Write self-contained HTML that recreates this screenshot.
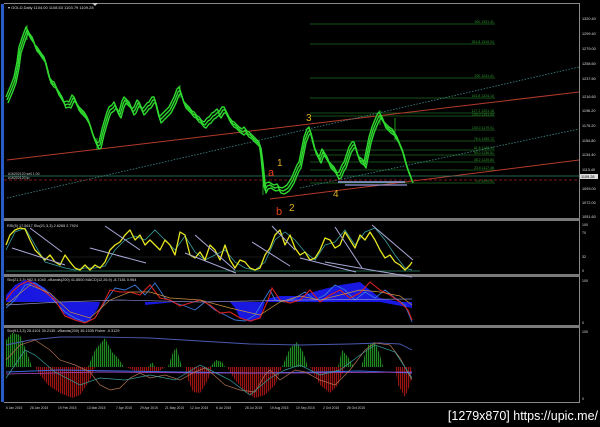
<!DOCTYPE html>
<html><head><meta charset="utf-8"><style>
html,body{margin:0;padding:0;background:#000;width:600px;height:427px;overflow:hidden}
svg{display:block}
text{font-family:"Liberation Sans",sans-serif}
</style></head><body>
<svg width="600" height="427" viewBox="0 0 600 427" xmlns="http://www.w3.org/2000/svg">
<defs>
<pattern id="gs" width="2" height="4" patternUnits="userSpaceOnUse"><rect width="1.2" height="4" fill="#1f8a1f"/></pattern>
<pattern id="rs" width="2" height="4" patternUnits="userSpaceOnUse"><rect width="1.2" height="4" fill="#9a1414"/></pattern>
</defs>
<rect width="600" height="427" fill="#000"/>
<rect x="1" y="4" width="3" height="398" fill="#2a5cc8"/>
<g fill="none" stroke="#8a8a8a" stroke-width="1">
<line x1="4" y1="3.5" x2="580" y2="3.5"/>
<line x1="579.5" y1="3" x2="579.5" y2="402"/>
<line x1="4" y1="402.5" x2="580" y2="402.5"/>
</g>
<rect x="4" y="218" width="576" height="3" fill="#7a7a7a"/>
<rect x="4" y="274" width="576" height="3" fill="#7a7a7a"/>
<rect x="4" y="325" width="576" height="3" fill="#7a7a7a"/>
<polygon points="92,3 98,3 95,6" fill="#ccc"/>

<text x="8" y="9" font-size="4" fill="#ddd">▾ GOLD,Daily  1104.00 1108.53 1103.79 1109.28</text>
<text x="8" y="175" font-size="3.5" fill="#ccc">#16202120 sell 1.00</text>
<text x="8" y="179" font-size="3.5" fill="#ccc">#16202120 tp</text>

<g stroke="#1f6a1f" stroke-width="0.8">
<line x1="310" y1="24" x2="495" y2="24"/>
<line x1="310" y1="44" x2="495" y2="44"/>
<line x1="310" y1="78" x2="495" y2="78"/>
<line x1="310" y1="98" x2="495" y2="98"/>
<line x1="310" y1="113" x2="495" y2="113"/>
<line x1="310" y1="116" x2="495" y2="116"/>
<line x1="310" y1="130" x2="495" y2="130"/>
<line x1="310" y1="141" x2="495" y2="141"/>
<line x1="310" y1="150" x2="495" y2="150"/>
<line x1="310" y1="155" x2="495" y2="155"/>
<line x1="310" y1="162" x2="495" y2="162"/>
<line x1="310" y1="170" x2="495" y2="170"/>
<line x1="310" y1="183" x2="495" y2="183"/>
</g>
<g font-size="3.5" fill="#2f9a2f" text-anchor="end">
<text x="494" y="23">300 1331.41</text><text x="494" y="43">261.8 1319.24</text>
<text x="494" y="77">200 1241.41</text><text x="494" y="97">161.8 1224.14</text>
<text x="494" y="112">127.2 1201.16</text><text x="494" y="115.5">100.0 1191.00</text>
<text x="494" y="129">100.0 1179.01</text><text x="494" y="140">76.4 1159.72</text>
<text x="494" y="149">61.8 1146.24</text><text x="494" y="154">50.0 1136.51</text>
<text x="494" y="161">38.2 1125.80</text><text x="494" y="169">23.6 1117.46</text>
<text x="494" y="182">0.0 1099.51</text>
</g>

<line x1="7" y1="160" x2="579" y2="92" stroke="#b33a2a" stroke-width="1"/>
<line x1="270" y1="199" x2="579" y2="160" stroke="#b33a2a" stroke-width="1"/>
<line x1="7" y1="198" x2="579" y2="67" stroke="#3f8a8a" stroke-width="0.8" stroke-dasharray="1.5,1.5"/>
<line x1="300" y1="188" x2="579" y2="129" stroke="#3f8a8a" stroke-width="0.8" stroke-dasharray="1.5,1.5"/>
<line x1="4" y1="176" x2="579" y2="176" stroke="#2f8a6a" stroke-width="0.8"/>
<line x1="4" y1="180" x2="579" y2="180" stroke="#aa2020" stroke-width="0.8" stroke-dasharray="3,2"/>
<line x1="338" y1="182" x2="405" y2="182" stroke="#99a8e8" stroke-width="1.5"/>
<line x1="345" y1="185" x2="407" y2="185" stroke="#9a98d8" stroke-width="1.2"/>

<g fill="none" stroke="#2fd82f" stroke-linejoin="round">
<polyline id="pr" stroke-width="1.4" points="7,100 12,88 15,80 18,65 20,50 24,38 27,30 30,36 33,40 36,48 38,50 42,56 45,60 48,72 50,80 53,84 55,85 58,92 60,95 63,100 65,105 68,104 70,105 73,98 75,100 78,107 80,110 83,113 85,115 88,120 90,125 93,135 95,140 98,146 100,145 103,132 105,125 108,115 110,110 113,108 115,105 118,112 120,115 123,104 125,100 128,103 130,105 133,112 135,110 138,103 140,105 143,112 145,110 148,106 150,105 153,100 155,100 158,112 160,120 163,117 165,115 168,112 170,110 173,104 175,100 178,92 180,90 183,100 185,105 188,108 190,110 193,114 195,115 198,119 200,120 203,124 205,125 208,121 210,120 213,116 215,115 218,112 220,115 223,110 225,110 228,116 230,120 233,124 235,125 238,128 240,130 243,132 245,130 248,134 250,135 253,138 255,140 258,143 260,145 262,160 263,170 265,190 267,186 270,185 273,187 275,188 278,187 280,190 283,191 285,190 288,188 290,185 293,180 295,175 298,168 300,165 303,150 305,140 308,132 310,130 313,142 315,150 318,156 320,160 323,152 325,155 328,160 330,165 333,168 335,170 338,176 340,175 343,168 345,165 348,156 350,150 353,145 355,145 358,156 360,160 363,162 365,165 368,150 370,140 373,130 375,125 378,118 380,115 383,120 385,125 388,128 390,130 393,132 395,135 398,140 400,145 403,152 405,160 408,170 410,175 412,180"/>
<use href="#pr" transform="translate(1,3)" stroke-width="0.8"/>
<use href="#pr" transform="translate(-1,-3)" stroke-width="0.8"/>
</g>
<g stroke="#2fd82f" stroke-width="0.7">
<line x1="27" y1="25" x2="27" y2="40"/><line x1="97" y1="138" x2="97" y2="150"/><line x1="180" y1="85" x2="180" y2="98"/><line x1="263" y1="162" x2="263" y2="195"/><line x1="380" y1="110" x2="380" y2="125"/><line x1="395" y1="118" x2="395" y2="140"/>
</g>

<g font-size="11">
<text x="268" y="176" fill="#e8401a">a</text>
<text x="277" y="166" fill="#e0b020" font-size="10">1</text>
<text x="276" y="215" fill="#e8401a">b</text>
<text x="289" y="211" fill="#e0b020" font-size="10">2</text>
<text x="306" y="121" fill="#e0b020" font-size="10">3</text>
<text x="333" y="197" fill="#e0b020" font-size="10">4</text>
</g>

<g font-size="3.8" fill="#ddd">
<text x="582" y="20">1320.40</text><text x="582" y="35">1299.40</text><text x="582" y="50">1279.00</text>
<text x="582" y="65">1258.60</text><text x="582" y="80">1237.60</text><text x="582" y="98">1216.60</text>
<text x="582" y="112">1196.20</text><text x="582" y="127">1175.20</text><text x="582" y="142">1154.80</text>
<text x="582" y="156">1134.40</text><text x="582" y="171">1113.40</text><text x="582" y="190">1093.00</text>
<text x="582" y="204">1072.00</text><text x="582" y="218">1051.60</text>
</g>
<rect x="580" y="174" width="18" height="5" fill="#ddd"/>
<text x="581" y="178" font-size="3.8" fill="#000">1109.28</text>

<text x="7" y="227" font-size="3.8" fill="#ddd">RSI(5) 17.5617  Sto(21,3,3) 2.6265 2.7924</text>
<line x1="6" y1="271" x2="420" y2="271" stroke="#2f8a6a" stroke-width="0.7"/>
<line x1="6" y1="257" x2="420" y2="257" stroke="#333" stroke-width="0.5"/>
<polyline fill="none" stroke="#3aa0a0" stroke-width="0.8" points="6,250 15,232 25,228 35,245 45,262 55,265 65,268 75,270 85,268 95,268 105,266 115,250 125,240 135,236 145,240 155,230 165,240 175,250 185,236 195,252 205,260 215,255 225,250 235,262 245,268 255,270 265,262 275,240 285,232 295,240 305,252 315,260 325,245 335,242 345,230 355,245 365,232 375,228 385,240 395,255 405,268 412,270"/>
<polyline fill="none" stroke="#e8e820" stroke-width="1.3" stroke-linejoin="round" points="6,245 10,235 15,230 20,228 25,229 30,240 35,250 40,255 45,260 50,255 55,262 60,265 65,255 70,262 75,268 80,270 85,265 90,270 95,265 100,268 105,262 110,250 115,245 120,242 125,235 130,230 135,240 140,235 145,245 150,240 155,245 160,250 165,240 170,245 175,255 180,232 185,235 190,255 195,258 200,252 205,260 210,245 215,250 220,260 225,245 230,260 235,268 240,260 245,262 250,268 255,270 260,268 265,255 270,248 275,235 280,230 285,245 290,235 295,248 300,255 305,252 310,260 315,258 320,250 325,238 330,240 335,248 340,245 345,232 350,240 355,248 360,235 365,240 370,232 375,240 380,250 385,258 390,255 395,262 400,265 405,270 410,265 412,262"/>
<g stroke="#a8a8d8" stroke-width="1">
<line x1="30" y1="228" x2="62" y2="252"/><line x1="12" y1="248" x2="65" y2="265"/>
<line x1="105" y1="226" x2="140" y2="250"/><line x1="90" y1="248" x2="146" y2="263"/>
<line x1="195" y1="235" x2="235" y2="270"/><line x1="185" y1="253" x2="236" y2="273"/>
<line x1="272" y1="226" x2="295" y2="250"/><line x1="252" y1="242" x2="290" y2="266"/>
<line x1="335" y1="227" x2="362" y2="268"/><line x1="300" y1="258" x2="356" y2="272"/>
<line x1="372" y1="225" x2="413" y2="260"/><line x1="325" y1="262" x2="412" y2="277"/>
</g>
<g font-size="3.5" fill="#ddd"><text x="582" y="226">100</text><text x="582" y="234">70</text><text x="582" y="258">32</text><text x="582" y="272">0</text></g>

<text x="7" y="281" font-size="3.8" fill="#ddd">Sto(21,3,3) 982.5.1040  -vBands(200) 41.8500  MACD(12,26,9) -8.7181 0.964</text>
<polygon fill="#1818e0" points="6,295 15,285 25,280 35,282 45,288 55,298 58,302 100,302 98,308 90,320 80,322 70,318 62,312 58,302 6,302" />
<polygon fill="#1818e0" points="58,302 145,302 145,305 175,302 230,302 235,308 240,318 250,322 260,318 265,302 270,298 280,296 300,296 320,290 340,285 360,282 380,298 400,302 412,302 412,308 380,302 265,302"/>
<polyline fill="none" stroke="#3a7ad8" stroke-width="0.9" points="6,308 15,300 25,285 35,283 45,290 55,302 65,312 75,318 85,322 95,318 105,302 115,288 125,290 135,285 145,295 155,283 165,298 175,303 185,306 195,310 205,302 215,310 225,315 235,320 245,321 255,315 265,298 270,290 275,300 285,302 295,298 305,292 315,300 325,295 335,285 345,290 355,300 365,292 375,298 385,290 395,298 405,305 412,322"/>
<polyline fill="none" stroke="#d82020" stroke-width="1.1" points="6,300 12,292 20,285 28,281 35,285 45,292 55,300 65,316 75,320 85,323 95,318 105,300 110,290 120,292 130,292 140,295 150,285 160,298 170,300 180,306 190,303 200,300 210,305 220,313 230,312 240,318 250,321 260,318 268,300 272,288 280,300 290,303 300,300 310,290 320,302 330,295 340,290 350,298 360,293 370,282 380,290 390,295 400,302 408,310 412,320"/>
<polyline fill="none" stroke="#c89040" stroke-width="0.7" points="6,305 30,285 50,293 70,312 90,318 110,300 130,292 150,292 170,298 200,300 230,308 260,315 280,302 300,296 320,300 340,295 360,290 380,292 400,296 412,305"/>
<polyline fill="none" stroke="#8888cc" stroke-width="0.7" points="6,305 60,302 120,300 200,302 300,300 412,299"/>
<g font-size="3.5" fill="#ddd"><text x="582" y="282">100</text><text x="582" y="324">0</text></g>

<text x="7" y="332" font-size="3.8" fill="#ddd">Sto(91,3,3) 25.4101 30.2135  -vBands(200) 36.1535  Fisher -0.3129</text>
<g>
<polygon fill="url(#gs)" points="6,367 6,340 12,333 20,335 26,350 32,367"/>
<polygon fill="url(#gs)" points="88,367 95,350 105,338 112,352 118,358 124,367"/>
<polygon fill="url(#gs)" points="148,367 152,362 155,367"/>
<polygon fill="url(#gs)" points="168,367 172,355 176,347 180,360 182,367"/>
<polygon fill="url(#gs)" points="210,367 216,360 222,362 225,367"/>
<polygon fill="url(#gs)" points="282,367 290,348 297,342 303,352 308,367"/>
<polygon fill="url(#gs)" points="338,367 342,350 348,357 354,367"/>
<polygon fill="url(#gs)" points="361,367 368,345 375,342 380,355 383,367"/>
<polygon fill="url(#rs)" points="35,367 95,367 90,380 80,395 72,398 60,393 48,385 40,375"/>
<polygon fill="url(#rs)" points="126,367 165,367 158,372 145,373 135,371"/>
<polygon fill="url(#rs)" points="185,367 212,367 208,380 200,393 193,392 188,380"/>
<polygon fill="url(#rs)" points="227,367 282,367 275,385 265,395 255,398 245,392 235,380"/>
<polygon fill="url(#rs)" points="310,367 345,367 338,385 330,393 320,385"/>
<polygon fill="url(#rs)" points="395,367 412,367 410,385 405,397 398,385"/>
</g>
<polyline fill="none" stroke="#3a6ae0" stroke-width="0.9" points="6,372 60,370 120,371 180,372 250,373 320,372 360,371 412,373"/>
<polyline fill="none" stroke="#b048c8" stroke-width="0.7" points="6,374 100,372 200,373 300,373 412,372"/>
<polyline fill="none" stroke="#4a5ab0" stroke-width="0.9" points="6,345 30,340 60,337 100,337 150,338 200,341 250,344 300,345 350,344 380,343 400,344 412,350"/>
<polyline fill="none" stroke="#b07050" stroke-width="0.7" points="6,360 20,345 35,340 50,350 60,360 75,365 90,372 100,385 110,390 120,388 130,378 140,373 150,378 165,375 180,380 195,372 205,368 215,376 225,385 240,390 255,392 265,375 270,370 280,380 295,370 305,372 320,380 335,385 350,370 365,350 375,343 390,345 400,358 412,380"/>
<polyline fill="none" stroke="#3a9a9a" stroke-width="0.7" points="6,378 15,365 25,350 35,355 55,372 80,385 100,378 125,380 150,375 175,380 200,365 210,370 230,380 250,395 270,378 285,370 300,365 320,375 340,370 360,355 375,345 395,352 412,378"/>
<g font-size="3.5" fill="#ddd"><text x="582" y="333">100</text><text x="582" y="400">0</text></g>

<g font-size="3.3" fill="#ccc">
<text x="6" y="409">6 Jan 2015</text><text x="30" y="409">28 Jan 2015</text><text x="58" y="409">19 Feb 2015</text><text x="87" y="409">13 Mar 2015</text><text x="116" y="409">7 Apr 2015</text><text x="140" y="409">29 Apr 2015</text><text x="165" y="409">21 May 2015</text><text x="190" y="409">12 Jun 2015</text><text x="216" y="409">6 Jul 2015</text><text x="245" y="409">28 Jul 2015</text><text x="270" y="409">19 Aug 2015</text><text x="296" y="409">10 Sep 2015</text><text x="323" y="409">2 Oct 2015</text><text x="347" y="409">26 Oct 2015</text>
</g>

<text x="598" y="420" font-size="12.5" fill="#fff" text-anchor="end" font-family="Liberation Sans, sans-serif">[1279x870] https://upic.me/</text>
</svg>
</body></html>
